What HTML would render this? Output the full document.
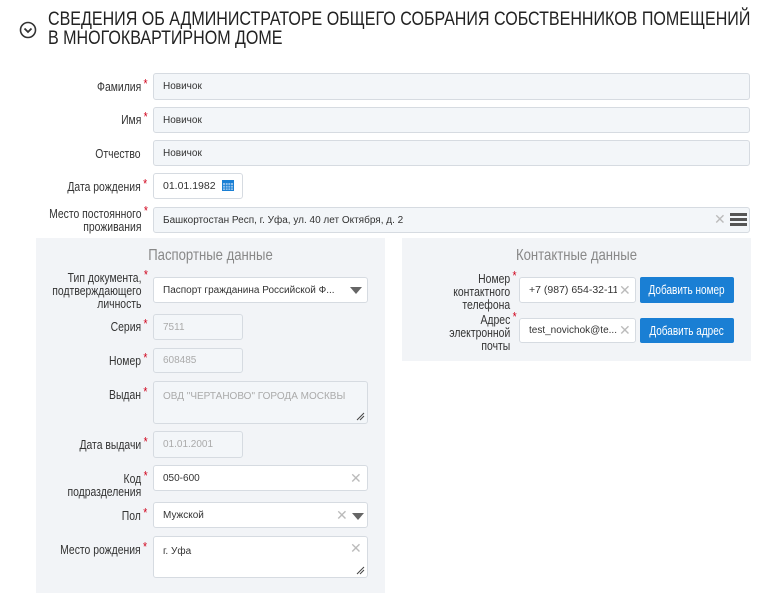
<!DOCTYPE html>
<html><head><meta charset="utf-8"><style>
*{box-sizing:border-box;margin:0;padding:0}
body{width:778px;height:599px;background:#fff;position:relative;overflow:hidden;font-family:"Liberation Sans",sans-serif;color:#333}
.a{position:absolute}
.t{font-size:19.5px;line-height:19px;color:#222;left:48px;white-space:nowrap;transform:scaleX(.823);transform-origin:left top}
.lab{position:absolute;font-size:13px;line-height:13px;text-align:right;color:#333;white-space:nowrap;transform:scaleX(.8);transform-origin:right top}
.lab i{color:#d0021b;font-style:normal;position:absolute;right:-8px;top:-3px}
.in{position:absolute;border:1px solid #d6dbe1;border-radius:3px;background:#f3f6f9;font-size:10px;color:#333;padding-left:9px;display:flex;align-items:center;white-space:nowrap;overflow:hidden}
.w{background:#fff}
.dis{color:#aaa;background:#f3f6f9}
.ta{align-items:flex-start;padding-top:9px}
.x{position:absolute;color:#bbb;font-size:14px;font-family:"DejaVu Sans",sans-serif;line-height:14px}
.tri{position:absolute;width:0;height:0;border-left:6px solid transparent;border-right:6px solid transparent;border-top:7px solid #666}
.panel{position:absolute;background:#f2f4f7}
.ph{position:absolute;font-size:16px;color:#888;text-align:center;transform:scaleX(.82)}
.btn{position:absolute;background:#1a7fd4;color:#fff;border-radius:2px;font-size:12.5px;display:flex;align-items:center;justify-content:center;white-space:nowrap}
.btn span{display:inline-block;transform:scaleX(.8)}
.rs{position:absolute}
</style></head><body>
<svg class="a" style="left:19px;top:21px" width="18" height="18" viewBox="0 0 18 18"><circle cx="9" cy="9" r="7.5" fill="none" stroke="#333" stroke-width="1.6"/><path d="M5.5 7.5 L9 11 L12.5 7.5" fill="none" stroke="#333" stroke-width="1.8"/></svg>
<div class="a t" style="top:10px">СВЕДЕНИЯ ОБ АДМИНИСТРАТОРЕ ОБЩЕГО СОБРАНИЯ СОБСТВЕННИКОВ ПОМЕЩЕНИЙ</div>
<div class="a t" style="top:29px">В МНОГОКВАРТИРНОМ ДОМЕ</div>

<div class="lab" style="right:637px;top:80px">Фамилия<i>*</i></div>
<div class="in" style="left:153px;top:73px;width:597px;height:27px">Новичок</div>
<div class="lab" style="right:637px;top:113px">Имя<i>*</i></div>
<div class="in" style="left:153px;top:107px;width:597px;height:26px">Новичок</div>
<div class="lab" style="right:637px;top:147px">Отчество</div>
<div class="in" style="left:153px;top:140px;width:597px;height:26px">Новичок</div>
<div class="lab" style="right:637px;top:180px">Дата рождения<i>*</i></div>
<div class="in w" style="left:153px;top:173px;width:90px;height:26px;font-size:10.5px">01.01.1982</div>
<svg class="a" style="left:222px;top:179px" width="12" height="12" viewBox="0 0 12 12"><rect x="0" y="1" width="12" height="11" fill="#1a7fd4"/><rect x="1" y="4" width="10" height="7" fill="#8fc0ec"/><path d="M1 6.5H11M1 9H11M3.5 4V11M6 4V11M8.5 4V11" stroke="#1a7fd4" stroke-width=".7"/></svg>
<div class="lab" style="right:637px;top:207px">Место постоянного<i>*</i><br>проживания</div>
<div class="in" style="left:153px;top:207px;width:597px;height:26px">Башкортостан Респ, г. Уфа, ул. 40 лет Октября, д. 2</div>
<div class="x" style="left:714px;top:213px">✕</div>
<div class="a" style="left:730px;top:213px;width:17px;height:3px;background:#555;box-shadow:0 5px 0 #555,0 10px 0 #555"></div>

<div class="panel" style="left:36px;top:238px;width:349px;height:355px"></div>
<div class="ph" style="left:36px;top:247px;width:349px">Паспортные данные</div>
<div class="lab" style="right:637px;top:271px">Тип документа,<i>*</i><br>подтверждающего<br>личность</div>
<div class="in w" style="left:153px;top:277px;width:215px;height:26px">Паспорт гражданина Российской Ф...</div>
<div class="tri" style="left:350px;top:287px"></div>
<div class="lab" style="right:637px;top:320px">Серия<i>*</i></div>
<div class="in dis" style="left:153px;top:314px;width:90px;height:26px">7511</div>
<div class="lab" style="right:637px;top:354px">Номер<i>*</i></div>
<div class="in dis" style="left:153px;top:348px;width:90px;height:25px">608485</div>
<div class="lab" style="right:637px;top:388px">Выдан<i>*</i></div>
<div class="in dis ta" style="left:153px;top:381px;width:215px;height:43px">ОВД "ЧЕРТАНОВО" ГОРОДА МОСКВЫ</div>
<svg class="rs" style="left:356px;top:412px" width="9" height="9"><path d="M1 8L8 1M4 8L8 4" stroke="#444" stroke-width="1"/></svg>
<div class="lab" style="right:637px;top:438px">Дата выдачи<i>*</i></div>
<div class="in dis" style="left:153px;top:431px;width:90px;height:27px">01.01.2001</div>
<div class="lab" style="right:637px;top:472px">Код<i>*</i><br>подразделения</div>
<div class="in w" style="left:153px;top:465px;width:215px;height:26px">050-600</div>
<div class="x" style="left:350px;top:472px">✕</div>
<div class="lab" style="right:637px;top:509px">Пол<i>*</i></div>
<div class="in w" style="left:153px;top:502px;width:215px;height:26px">Мужской</div>
<div class="x" style="left:336px;top:509px">✕</div>
<div class="tri" style="left:352px;top:513px"></div>
<div class="lab" style="right:637px;top:543px">Место рождения<i>*</i></div>
<div class="in w ta" style="left:153px;top:536px;width:215px;height:42px">г. Уфа</div>
<div class="x" style="left:350px;top:542px">✕</div>
<svg class="rs" style="left:356px;top:566px" width="9" height="9"><path d="M1 8L8 1M4 8L8 4" stroke="#444" stroke-width="1"/></svg>

<div class="panel" style="left:402px;top:238px;width:349px;height:123px"></div>
<div class="ph" style="left:402px;top:247px;width:349px">Контактные данные</div>
<div class="lab" style="right:268px;top:272px">Номер<i>*</i><br>контактного<br>телефона</div>
<div class="in w" style="left:519px;top:277px;width:117px;height:26px;font-size:10.5px">+7 (987) 654-32-11</div>
<div class="a" style="left:617px;top:279px;width:18px;height:22px;background:#fff"></div>
<div class="x" style="left:619px;top:284px">✕</div>
<div class="btn" style="left:640px;top:277px;width:94px;height:26px"><span>Добавить номер</span></div>
<div class="lab" style="right:268px;top:313px">Адрес<i>*</i><br>электронной<br>почты</div>
<div class="in w" style="left:519px;top:318px;width:117px;height:25px;font-size:10px">test_novichok@te...</div>
<div class="a" style="left:617px;top:320px;width:18px;height:21px;background:#fff"></div>
<div class="x" style="left:619px;top:324px">✕</div>
<div class="btn" style="left:640px;top:318px;width:94px;height:25px"><span>Добавить адрес</span></div>
</body></html>
